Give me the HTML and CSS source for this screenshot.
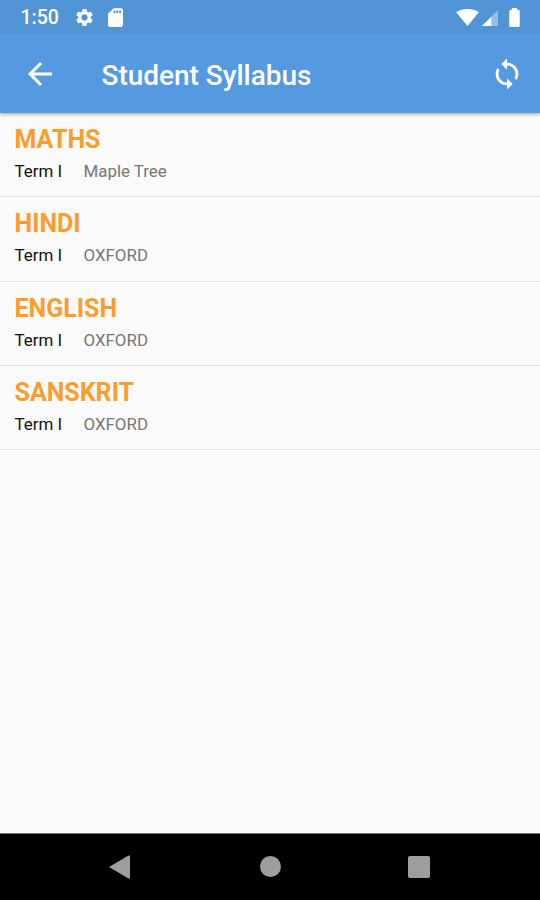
FILE: index.html
```html
<!DOCTYPE html>
<html lang="en">
<head>
<meta charset="UTF-8">
<meta name="viewport" content="width=device-width, initial-scale=1.0">
<title>Student Syllabus</title>
<link rel="stylesheet" href="styles.css">
</head>
<body>
    <div class="screen">
        <!-- Status bar -->
        <div class="status-bar">
            <span class="time">1:50</span>
            <svg class="gear" viewBox="0 0 24 24"><path d="M19.14 12.94c.04-.3.06-.61.06-.94 0-.32-.02-.64-.07-.94l2.03-1.58c.18-.14.23-.41.12-.61l-1.92-3.32c-.12-.22-.37-.29-.59-.22l-2.39.96c-.5-.38-1.03-.7-1.62-.94l-.36-2.54c-.04-.24-.24-.41-.48-.41h-3.84c-.24 0-.43.17-.47.41l-.36 2.54c-.59.24-1.13.57-1.62.94l-2.39-.96c-.22-.08-.47 0-.59.22L2.74 8.87c-.12.21-.08.47.12.61l2.03 1.58c-.05.3-.09.63-.09.94s.02.64.07.94l-2.03 1.58c-.18.14-.23.41-.12.61l1.92 3.32c.12.22.37.29.59.22l2.39-.96c.5.38 1.03.7 1.62.94l.36 2.54c.05.24.24.41.48.41h3.84c.24 0 .44-.17.47-.41l.36-2.54c.59-.24 1.13-.56 1.62-.94l2.39.96c.22.08.47 0 .59-.22l1.92-3.32c.12-.22.07-.47-.12-.61l-2.01-1.58zM12 15.6c-1.98 0-3.6-1.62-3.6-3.6s1.62-3.6 3.6-3.6 3.6 1.62 3.6 3.6-1.62 3.6-3.6 3.6z"/></svg>
            <svg class="sd-card" viewBox="4 2 16 20"><path d="M18 2h-8L4.02 8 4 20c0 1.100.9 2 2 2h12c1.100 0 2-.9 2-2V4c0-1.100-.9-2-2-2zm-6 5.500h-2V4.500h2v3zm3 0h-2V4.500h2v3zm3 0h-2V4.500h2v3z"/></svg>
            <div class="signals">
                <svg class="wifi" viewBox="0 0 24 18"><path d="M12 18 0 3.500C3.400 1 7.500 0 12 0s8.600 1 12 3.500z"/></svg>
                <svg class="cell" viewBox="0 0 16 16"><path opacity=".4" d="M0 16 16 0v16z"/><path d="M0 16 9.300 6.700V16z"/></svg>
                <svg class="battery" viewBox="0 0 11 20"><path d="M9.700 2H8.500V1Q8.500 0 7.500 0h-4Q2.500 0 2.500 1v1H1.300C.6 2 0 2.600 0 3.300v15.400C0 19.400.6 20 1.300 20h8.400c.7 0 1.300-.6 1.300-1.300V3.300C11 2.600 10.400 2 9.700 2z"/></svg>
            </div>
        </div>

        <!-- Title bar -->
        <div class="toolbar">
            <svg class="back" viewBox="0 0 24 24"><path d="M20 11H7.830l5.590-5.590L12 4l-8 8 8 8 1.410-1.410L7.830 13H20v-2z"/></svg>
            <h1>Student Syllabus</h1>
            <svg class="sync" viewBox="0 0 24 24"><path d="M12 4V1L8 5l4 4V6c3.310 0 6 2.690 6 6 0 1.010-.25 1.970-.7 2.800l1.460 1.460C19.540 15.030 20 13.570 20 12c0-4.420-3.580-8-8-8zm0 14c-3.310 0-6-2.690-6-6 0-1.010.25-1.970.7-2.800L5.240 7.740C4.460 8.970 4 10.430 4 12c0 4.420 3.580 8 8 8v3l4-4-4-4v3z"/></svg>
        </div>

        <!-- Subjects -->
        <div class="list">
            <div class="subject">
                <h2>MATHS</h2>
                <p><span class="term">Term I</span><span class="book">Maple Tree</span></p>
            </div>
            <div class="subject">
                <h2>HINDI</h2>
                <p><span class="term">Term I</span><span class="book">OXFORD</span></p>
            </div>
            <div class="subject">
                <h2>ENGLISH</h2>
                <p><span class="term">Term I</span><span class="book">OXFORD</span></p>
            </div>
            <div class="subject">
                <h2>SANSKRIT</h2>
                <p><span class="term">Term I</span><span class="book">OXFORD</span></p>
            </div>
        </div>

        <!-- Navigation bar -->
        <div class="nav-bar">
            <svg class="nav-back" viewBox="0 0 21 24"><path d="M0 12 19.500.6c.8-.4 1.500 0 1.500.8v21.200c0 .8-.7 1.200-1.500.8z"/></svg>
            <span class="nav-home"></span>
            <span class="nav-recent"></span>
        </div>
    </div>
</body>
</html>
```
FILE: styles.css
```css
body {
    margin: 0;
    font-family: Roboto, sans-serif;
    background: #fafafa;
}

svg {
    display: block;
    flex: none;
    fill: #fff;
}

.screen {
    display: flex;
    flex-direction: column;
    height: 900px;
    overflow: hidden;
}

.status-bar {
    display: flex;
    align-items: center;
    height: 34px;
    box-sizing: border-box;
    padding: 1px 20.5px 0 20.5px;
    background: #5094d5;
    color: #fff;
    z-index: 2;
}

.time {
    width: 53px;
    font-size: 19.5px;
    font-weight: 500;
    line-height: 34px;
    white-space: nowrap;
}

.gear {
    width: 21px;
    height: 21px;
}

.sd-card {
    width: 15px;
    height: 19px;
    margin-left: 13px;
}

.signals {
    display: flex;
    align-items: center;
    margin-left: auto;
}

.wifi {
    width: 23px;
    height: 17px;
}

.cell {
    width: 16px;
    height: 16px;
    margin-left: 3px;
}

.battery {
    width: 11px;
    height: 19px;
    margin-left: 10.5px;
}

.toolbar {
    display: flex;
    align-items: center;
    height: 79px;
    box-sizing: border-box;
    padding: 0 16.5px 0 22px;
    background: #559ae0;
    box-shadow: 0 1px 4px rgba(0, 0, 0, 0.4);
    z-index: 1;
}

.back {
    width: 36px;
    height: 36px;
}

.toolbar h1 {
    margin: 4px 0 0 43.5px;
    font-size: 28px;
    font-weight: 500;
    line-height: 36px;
    letter-spacing: -0.02px;
    color: #fff;
    white-space: nowrap;
}

.sync {
    width: 34px;
    height: 34px;
    margin-left: auto;
}

.list {
    flex: 1;
}

.subject {
    height: 84.3px;
    box-sizing: border-box;
    padding: 11px 15px 0 14.5px;
    border-bottom: 1px solid #e0e0e0;
}

.subject h2 {
    margin: 0;
    font-size: 25px;
    font-weight: 700;
    line-height: 32px;
    color: #fb9d2e;
}

.subject p {
    display: flex;
    margin: 3px 0 0;
    font-size: 16.9px;
    line-height: 24px;
}

.term {
    width: 69px;
    color: #111;
}

.book {
    color: #777;
}

.nav-bar {
    display: flex;
    align-items: center;
    height: 67px;
    box-sizing: border-box;
    padding: 0 0 1px 109px;
    background: #000;
    border-top: 1px solid #777;
}

.nav-back {
    width: 21px;
    height: 24px;
    fill: #9e9e9e;
}

.nav-home {
    width: 21px;
    height: 21px;
    margin-left: 130px;
    border-radius: 50%;
    background: #9e9e9e;
}

.nav-recent {
    width: 22px;
    height: 22px;
    margin-left: 126.5px;
    border-radius: 2px;
    background: #9e9e9e;
}
```
